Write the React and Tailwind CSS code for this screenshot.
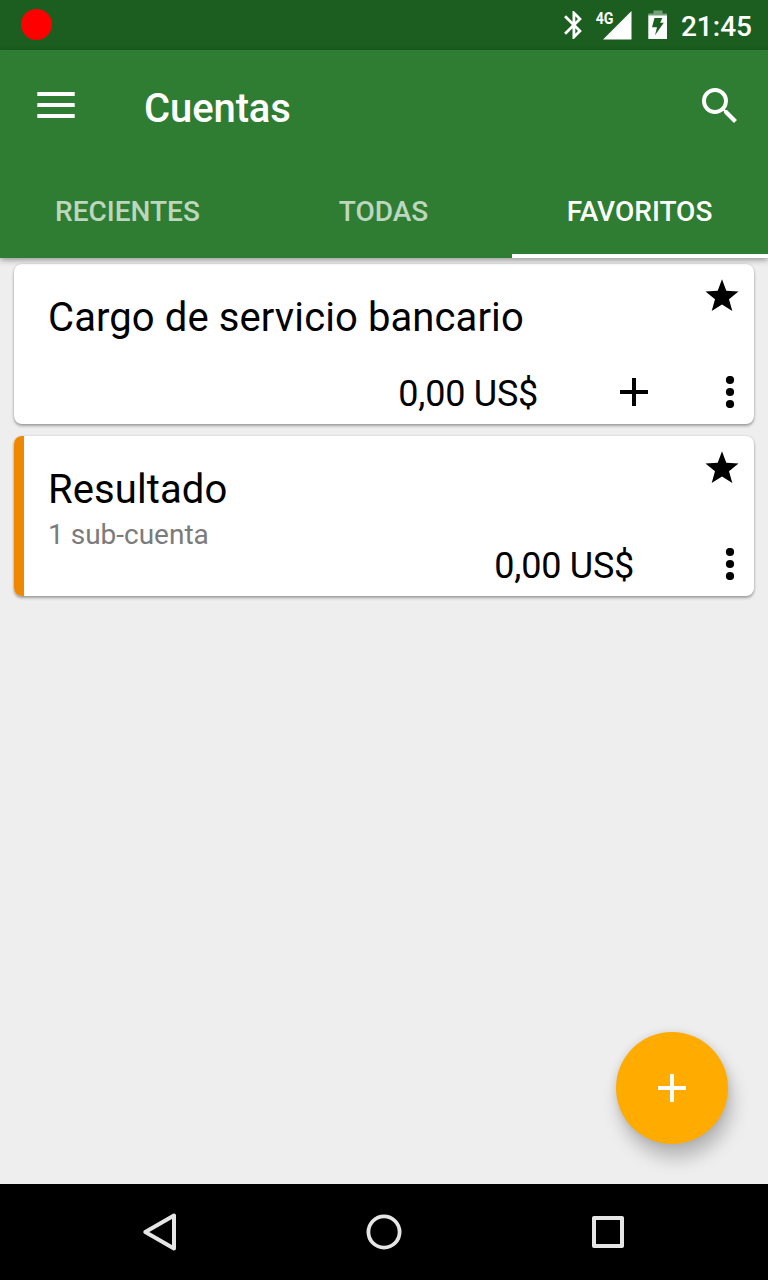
const ACCOUNTS = [
  { name: 'Cargo de servicio bancario', balance: '0,00 US$', canAdd: true },
  { name: 'Resultado', detail: '1 sub-cuenta', balance: '0,00 US$', accent: true },
];

function StatusBar() {
  return (
    <div className="flex h-[50px] shrink-0 items-center bg-[#1b5e20] pl-[21px] pr-4">
      <div className="mb-px size-[31px] rounded-full bg-[#ff0000]" />
      <div className="ml-auto flex items-center text-white">
        <svg className="mr-[14px] h-7 w-[18px]" viewBox="5 2 12.71 20" fill="currentColor">
          <path d="M17.71 7.71 12 2h-1v7.59L6.41 5 5 6.41 10.59 12 5 17.59 6.41 19 11 14.41V22h1l5.71-5.71-4.3-4.29 4.3-4.29zM13 5.83l1.88 1.88L13 9.59V5.83zm1.88 10.46L13 18.17v-3.76l1.88 1.88z" />
        </svg>
        <svg className="mr-4 h-[30px] w-9 overflow-visible" viewBox="0 0 36 30" fill="currentColor">
          <path d="M7 29.500 35.500 1v28.500z" />
          <text x="-0.3" y="13.500" fontSize="17" fontWeight="700" textLength="17.8" lengthAdjust="spacingAndGlyphs">4G</text>
        </svg>
        <svg className="mr-[13px] h-[30px] w-5" viewBox="0 0 20 30" fill="currentColor">
          <path d="M5.500 .5h9v3H19V6H.3V3.500H5.500z" opacity=".4" />
          <path fillRule="evenodd" d="M.3 5.500H19V29H.3zM6.500 8 4 17.300h5L7 25.300l8.800-12.600h-3.600L14.300 8z" />
        </svg>
        <span className="pt-[3px] text-[28px] font-medium leading-8">21:45</span>
      </div>
    </div>
  );
}

function Tab({ label, active }) {
  return (
    <button
      className={
        active
          ? 'flex items-center justify-center border-b-4 border-white pr-px pt-2 text-white'
          : 'flex items-center justify-center border-b-4 border-transparent pr-px pt-2 text-white/70'
      }
    >
      {label}
    </button>
  );
}

function Header() {
  return (
    <header className="relative z-10 shrink-0 bg-[#2e7d32] text-white shadow-[0_2px_6px_rgba(0,0,0,0.38)]">
      <div className="flex h-28 items-center pl-[37px] pr-6">
        <svg className="mb-[2px] h-[26px] w-[38px]" viewBox="0 0 38 26" fill="currentColor">
          <path d="M.3 0h37.400v4H.3zM.3 11h37.400v4H.3zM.3 22h37.400v4H.3z" />
        </svg>
        <h1 className="ml-[69px] pt-[6px] text-[40px] font-medium leading-[48px] tracking-[-0.1px]">Cuentas</h1>
        <svg className="ml-auto size-12" viewBox="0 0 24 24" fill="currentColor">
          <path d="M15.500 14h-.79l-.28-.27A6.471 6.471 0 0 0 16 9.500 6.500 6.500 0 1 0 9.500 16c1.610 0 3.090-.59 4.230-1.570l.27.28v.79l5 4.990L20.490 19l-4.990-5zm-6 0C7.010 14 5 11.990 5 9.500S7.010 5 9.500 5 14 7.010 14 9.500 11.990 14 9.500 14z" />
        </svg>
      </div>
      <nav className="grid h-24 grid-cols-3 text-[28px] font-medium">
        <Tab label="RECIENTES" />
        <Tab label="TODAS" />
        <Tab label="FAVORITOS" active />
      </nav>
    </header>
  );
}

function Plus() {
  return (
    <svg className="size-7" viewBox="0 0 28 28" fill="currentColor">
      <path d="M12 0h4v12h12v4H16v12h-4V16H0v-4h12z" />
    </svg>
  );
}

function AccountCard({ account }) {
  return (
    <article className="flex h-40 overflow-hidden rounded-lg bg-white text-black shadow-[0_2px_3px_rgba(0,0,0,0.32),0_0_2px_rgba(0,0,0,0.15)]">
      <div className={account.accent ? 'w-[10px] bg-[#ef8800]' : 'w-[10px]'} />
      <div className="flex flex-1 flex-col pl-6">
        <div className="flex h-[104px] justify-between pr-[15px]">
          <div className="pt-[30px]">
            <h2 className="text-[40px] leading-[48px] tracking-[0.1px]">{account.name}</h2>
            {account.detail && (
              <p className="mt-1 text-[28px] leading-[33px] text-[#7b7b7b]">{account.detail}</p>
            )}
          </div>
          <svg className="mt-[15px] h-[33px] w-[34px]" viewBox="0 0 34 33" fill="currentColor">
            <path d="M17 .2l4.300 11.600 12.200.6-9.500 7.900L27.300 32 17 25.500 6.700 32 10 20.300.5 12.400l12.200-.6z" />
          </svg>
        </div>
        <div className="flex h-12 items-center justify-end pr-[19px]">
          <span className="pt-1 text-[36px] leading-[42px] tracking-[-0.25px]">{account.balance}</span>
          {account.canAdd && (
            <span className="ml-[82px] -mr-[14px]">
              <Plus />
            </span>
          )}
          <svg className="ml-[91px] h-8 w-[10px]" viewBox="0 0 10 32" fill="currentColor">
            <circle cx="5" cy="4" r="4.100" />
            <circle cx="5" cy="16" r="4.100" />
            <circle cx="5" cy="28" r="4.100" />
          </svg>
        </div>
      </div>
    </article>
  );
}

function NavigationBar() {
  return (
    <div className="flex h-24 shrink-0 items-center justify-between bg-black px-[136px]">
      <svg className="size-12" viewBox="0 0 48 48" fill="none" stroke="#e6e6e6" strokeWidth="4" strokeLinejoin="round">
        <path d="M38 7.500v33L9.300 24z" />
      </svg>
      <svg className="size-12" viewBox="0 0 48 48" fill="none" stroke="#e6e6e6" strokeWidth="3.800">
        <circle cx="24" cy="24" r="15.600" />
      </svg>
      <svg className="size-12" viewBox="0 0 48 48" fill="none" stroke="#e6e6e6" strokeWidth="4" strokeLinejoin="round">
        <path d="M10 10h28v28H10z" />
      </svg>
    </div>
  );
}

export default function App() {
  return (
    <div className="flex h-[1280px] w-[768px] flex-col overflow-hidden bg-[#eeeeee] font-['Roboto',sans-serif]">
      <StatusBar />
      <Header />
      <main className="relative flex flex-1 flex-col gap-3 px-[14px] pt-[6px]">
        {ACCOUNTS.map((account) => (
          <AccountCard key={account.name} account={account} />
        ))}
        <button className="absolute bottom-10 right-10 flex size-28 items-center justify-center rounded-full bg-[#ffab00] text-white shadow-[4px_14px_18px_rgba(0,0,0,0.23),0_0_8px_rgba(0,0,0,0.1)]">
          <Plus />
        </button>
      </main>
      <NavigationBar />
    </div>
  );
}
